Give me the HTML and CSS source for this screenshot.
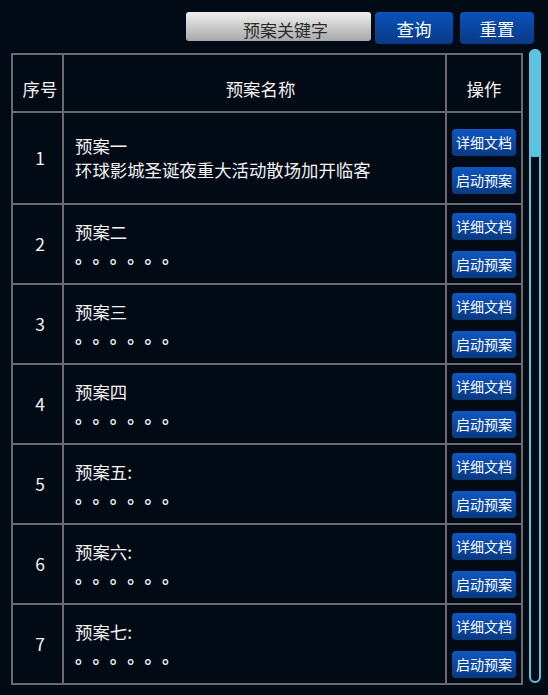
FILE: index.html
```html
<!DOCTYPE html>
<html lang="zh-CN">
<head>
<meta charset="utf-8">
<title>预案列表</title>
<link rel="stylesheet" href="styles.css">
</head>
<body>
<div class="toolbar">
  <div class="search">预案关键字</div>
  <button class="btn btn-query">查询</button>
  <button class="btn btn-reset">重置</button>
</div>
<div class="main">
  <div class="table">
    <div class="cell head idx">序号</div>
    <div class="cell head name center">预案名称</div>
    <div class="cell head opshead">操作</div>

    <div class="cell idx">1</div>
    <div class="cell name"><div><div>预案一</div><div>环球影城圣诞夜重大活动散场加开临客</div></div></div>
    <div class="cell ops first"><button class="op">详细文档</button><button class="op">启动预案</button></div>

    <div class="cell idx">2</div>
    <div class="cell name"><div><div>预案二</div><div class="dots">。。。。。。</div></div></div>
    <div class="cell ops"><button class="op">详细文档</button><button class="op">启动预案</button></div>

    <div class="cell idx">3</div>
    <div class="cell name"><div><div>预案三</div><div class="dots">。。。。。。</div></div></div>
    <div class="cell ops"><button class="op">详细文档</button><button class="op">启动预案</button></div>

    <div class="cell idx">4</div>
    <div class="cell name"><div><div>预案四</div><div class="dots">。。。。。。</div></div></div>
    <div class="cell ops"><button class="op">详细文档</button><button class="op">启动预案</button></div>

    <div class="cell idx">5</div>
    <div class="cell name"><div><div>预案五:</div><div class="dots">。。。。。。</div></div></div>
    <div class="cell ops"><button class="op">详细文档</button><button class="op">启动预案</button></div>

    <div class="cell idx">6</div>
    <div class="cell name"><div><div>预案六:</div><div class="dots">。。。。。。</div></div></div>
    <div class="cell ops"><button class="op">详细文档</button><button class="op">启动预案</button></div>

    <div class="cell idx">7</div>
    <div class="cell name"><div><div>预案七:</div><div class="dots">。。。。。。</div></div></div>
    <div class="cell ops"><button class="op">详细文档</button><button class="op">启动预案</button></div>
  </div>
  <div class="scrollbar"><div class="thumb"></div></div>
</div>
</body>
</html>
```
FILE: styles.css
```css
html, body {
  margin: 0;
  padding: 0;
  background: #020b15;
}
body {
  font-family: "Noto Sans CJK SC", "Noto Sans", sans-serif;
  color: #f2f2f2;
  text-spacing-trim: space-all;
}
.toolbar {
  display: flex;
  justify-content: flex-end;
  align-items: flex-start;
  height: 44px;
  padding: 12px 14px 0 0;
  box-sizing: border-box;
}
.search {
  width: 185px;
  height: 29px;
  margin-right: 4px;
  border-radius: 3px;
  background: linear-gradient(#efefef, #a8a8a8);
  color: #2b2b2b;
  font-size: 17px;
  display: flex;
  align-items: center;
  justify-content: center;
  padding: 6px 0 0 14px;
  box-sizing: border-box;
}
.btn {
  height: 32px;
  border: 0;
  border-radius: 4px;
  padding: 0;
  color: #ffffff;
  font-family: "Noto Sans CJK SC", sans-serif;
  font-size: 17.5px;
  background: linear-gradient(#0b52bb, #093a86);
}
.btn-query {
  width: 78px;
  margin-right: 7px;
}
.btn-reset {
  width: 74px;
}
.main {
  display: flex;
  align-items: flex-start;
  margin-top: 5px;
  padding-left: 11px;
}
.table {
  margin-top: 4px;
  width: 512px;
  box-sizing: border-box;
  display: grid;
  grid-template-columns: 49px 381px 74px;
  grid-template-rows: 56px 90px repeat(6, 78px);
  gap: 2px;
  background: #6b6b6b;
  border: 2px solid #6b6b6b;
}
.cell {
  background: #020b15;
  font-size: 17.4px;
  line-height: 24px;
  display: flex;
  align-items: center;
  box-sizing: border-box;
}
.idx {
  justify-content: center;
  padding-left: 5px;
}
.name {
  padding-left: 11px;
}
.name.center {
  justify-content: center;
  padding-left: 12px;
}
.dots {
  text-spacing-trim: space-all;
  font-feature-settings: "fwid" 1;
  font-weight: 700;
}
.opshead {
  justify-content: center;
}
.head {
  align-items: flex-start;
  padding-top: 22px;
}
.ops {
  flex-direction: column;
  justify-content: center;
  align-items: center;
  gap: 11px;
  padding-top: 3px;
}
.ops.first {
  padding-top: 7px;
}
.op {
  width: 64px;
  height: 27px;
  border: 0;
  border-radius: 4px;
  padding: 0;
  color: #ffffff;
  font-family: "Noto Sans CJK SC", sans-serif;
  font-size: 14px;
  line-height: 27px;
  background: linear-gradient(#0e57c4, #0a3a80);
}
.scrollbar {
  width: 12px;
  height: 634px;
  margin-left: 6px;
  border: 2px solid #5bc3e0;
  border-radius: 6px;
  box-sizing: border-box;
}
.thumb {
  margin: -2px;
  height: 108px;
  background: #5bc3e0;
  border-radius: 6px 6px 4px 4px;
}
```
